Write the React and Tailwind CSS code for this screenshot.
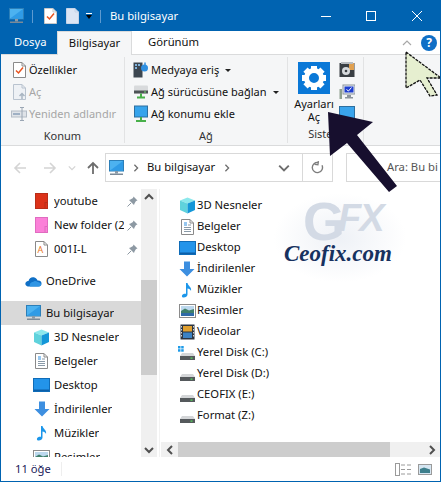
import React from "react";

const font = { fontFamily: '"Noto Sans", sans-serif' };

function Pc({ className = "w-[17px] h-[16px]" }) {
  return (
    <svg viewBox="0 0 17 16" className={className}>
      <rect x="1.5" y="0.5" width="14" height="10.5" fill="#4cb2f0" stroke="#2c7fb8" />
      <path d="M2 10.5 L15 1 V10.5 Z" fill="#2f9be6" />
      <rect x="7" y="11" width="3" height="2.5" fill="#8a9aa8" />
      <rect x="2" y="13.5" width="13" height="1.5" fill="#7b8a98" />
    </svg>
  );
}

function Doc({ children, className = "w-[13px] h-[16px]", stroke = "#8a8a8a", fill = "#fff" }) {
  return (
    <svg viewBox="0 0 13 16" className={className}>
      <path d="M0.5 0.5 H9 L12.5 4 V15.5 H0.5 Z" fill={fill} stroke={stroke} />
      <path d="M9 0.5 V4 H12.5" fill="none" stroke={stroke} />
      {children}
    </svg>
  );
}

// coloured page with its small fold at the bottom right
function Swatch({ fill, edge }) {
  return (
    <svg viewBox="0 0 13 16" className="w-[13px] h-[16px]">
      <rect x="0.5" y="0.5" width="12" height="15" fill={fill} stroke={edge} />
      <rect x="10" y="9.5" width="2.5" height="6" fill={fill} stroke={edge} />
    </svg>
  );
}

function Check() {
  return <path d="M3 8.5 L5.5 11 L10 5.5" fill="none" stroke="#e8531f" strokeWidth="1.5" />;
}

function Drive({ win }) {
  return (
    <svg viewBox="0 0 18 16" className="w-[18px] h-[16px]">
      {win && (
        <g fill="#1e9be8">
          <rect x="0" y="1" width="2.5" height="2.5" />
          <rect x="3.2" y="1" width="2.5" height="2.5" />
          <rect x="0" y="4.2" width="2.5" height="2.5" />
          <rect x="3.2" y="4.2" width="2.5" height="2.5" />
        </g>
      )}
      <path d="M4 8 H15 L17 11 H2 Z" fill="#d4d6d8" />
      <rect x="2" y="11" width="15" height="4" fill="#55595c" />
      <rect x="12.5" y="12.5" width="2" height="1.2" fill="#55e05a" />
    </svg>
  );
}

function Cube() {
  return (
    <svg viewBox="0 0 17 17" className="w-[17px] h-[17px]">
      <path d="M8.5 0.5 L16 3.5 L8.5 6.5 L1 3.5 Z" fill="#8ce8ec" />
      <path d="M1 3.5 L8.5 6.5 V16.5 L1 13 Z" fill="#5fd2dc" />
      <path d="M16 3.5 L8.5 6.5 V16.5 L16 13 Z" fill="#1497d8" />
    </svg>
  );
}

function Papers() {
  return (
    <Doc className="w-[13px] h-[16px]">
      <path d="M3 4 H6 M3 6 H6" stroke="#2f8fe0" />
      <path d="M7 6 H10 M3 8.5 H10 M3 10.5 H10 M3 12.5 H10" stroke="#8a9aa8" />
    </Doc>
  );
}

function Desk() {
  return (
    <svg viewBox="0 0 17 14" className="w-[17px] h-[14px]">
      <rect x="0.5" y="0.5" width="16" height="13" fill="#2394ea" stroke="#0f6cb8" />
      <rect x="1" y="11.5" width="15" height="1.5" fill="#0c5fa8" />
    </svg>
  );
}

function Down() {
  return (
    <svg viewBox="0 0 16 16" className="w-[16px] h-[16px]">
      <path d="M5 0.5 H11 V8 H15.5 L8 15.5 L0.5 8 H5 Z" fill="#3d8fe0" />
    </svg>
  );
}

function Note() {
  return (
    <svg viewBox="0 0 12 16" className="w-[12px] h-[16px]">
      <path d="M5 1 H6.5 C7 4 11 5 10 9 C9.5 7.5 8 6.5 6.5 6.5 V12.5 C6.5 14.5 4.5 15.5 2.8 15.5 C1.3 15.5 0.6 14.5 1 13.4 C1.5 12 3.5 11.3 5 11.8 Z" fill="#1c96ea" />
    </svg>
  );
}

function Pic() {
  return (
    <svg viewBox="0 0 17 14" className="w-[17px] h-[14px]">
      <rect x="0.5" y="0.5" width="16" height="13" fill="#fff" stroke="#8b8b8b" />
      <rect x="2" y="2" width="13" height="5" fill="#bcd8ee" />
      <path d="M2 7 L6 4.5 L10 6.5 L15 5 V12 H2 Z" fill="#3f7f6a" />
      <rect x="2" y="9" width="13" height="3" fill="#2f6aa8" />
    </svg>
  );
}

function Film() {
  return (
    <svg viewBox="0 0 15 16" className="w-[15px] h-[16px]">
      <rect x="0.5" y="0.5" width="14" height="15" fill="#2c3440" />
      <rect x="3" y="2" width="9" height="5.5" fill="#e0a030" />
      <rect x="3" y="8.5" width="9" height="5.5" fill="#3b82c4" />
      <path d="M1.5 2 V14 M13.5 2 V14" stroke="#cfd4da" strokeDasharray="1.5 1.5" />
    </svg>
  );
}

function Pin() {
  return (
    <svg viewBox="0 0 11 11" className="w-[11px] h-[11px]">
      <path d="M6.5 0.5 L10.5 4.5 L9 5 L7.5 7.5 L7 9 L2 4 L3.5 3.5 L6 2 Z" fill="#8d99a3" />
      <path d="M4 7 L0.5 10.5" stroke="#8d99a3" />
    </svg>
  );
}

function Gear() {
  return (
    <svg viewBox="0 0 32 32" className="w-[32px] h-[32px]">
      <rect width="32" height="32" fill="#0a78d7" />
      {[0, 45, 90, 135, 180, 225, 270, 315].map((a) => (
        <rect key={a} x="13" y="4" width="6" height="6" fill="#fff" transform={`rotate(${a} 16 16)`} />
      ))}
      <circle cx="16" cy="16" r="7.5" fill="none" stroke="#fff" strokeWidth="5" />
    </svg>
  );
}

function Chev({ dir = "down", className = "w-[10px] h-[10px]", stroke = "#6d6d6d", width = 1.6 }) {
  const d = {
    down: "M1 3 L5 7 L9 3",
    up: "M1 7 L5 3 L9 7",
    left: "M7 1 L3 5 L7 9",
    right: "M3 1 L7 5 L3 9",
  }[dir];
  return (
    <svg viewBox="0 0 10 10" className={className}>
      <path d={d} fill="none" stroke={stroke} strokeWidth={width} />
    </svg>
  );
}

function Caret() {
  return <span className="ml-[6px] w-0 h-0 border-x-[3px] border-x-transparent border-t-[3px] border-t-[#222]" />;
}

function NavRow({ icon, label, pin, indent = "pl-[32px]", selected }) {
  return (
    <div className={`flex items-center h-[24px] shrink-0 ${indent} ${selected ? "bg-[#d9d9d9]" : ""}`}>
      <span className="w-[21px] shrink-0 flex justify-center pr-[4px]">{icon}</span>
      <span className={`overflow-hidden whitespace-nowrap ${pin ? "w-[70px]" : ""}`}>{label}</span>
      {pin && <span className="ml-[3px]"><Pin /></span>}
    </div>
  );
}

function RibbonRow({ icon, label, muted, caret }) {
  return (
    <div className={`flex items-center h-[22px] whitespace-nowrap ${muted ? "text-[#a6a6a6]" : ""}`}>
      <span className="w-[18px] flex justify-center mr-[1px]">{icon}</span>
      <span>{label}</span>
      {caret && <Caret />}
    </div>
  );
}

function MediaIcon() {
  return (
    <svg viewBox="0 0 16 16" className="w-[16px] h-[16px]">
      <rect x="0.5" y="0.5" width="9" height="15" fill="#3c4650" />
      <rect x="2" y="2" width="2" height="2" fill="#7fb2dc" />
      <rect x="5" y="2" width="2" height="2" fill="#7fb2dc" />
      <rect x="2" y="5" width="2" height="2" fill="#7fb2dc" />
      <circle cx="11.5" cy="6" r="3.5" fill="#2f8fe0" />
      <path d="M12 0.5 V5" stroke="#2f8fe0" strokeWidth="1.5" />
    </svg>
  );
}

function NetDrive() {
  return (
    <svg viewBox="0 0 16 16" className="w-[16px] h-[16px]">
      <rect x="1" y="1.5" width="14" height="8" rx="1" fill="#d8dadc" />
      <rect x="1" y="6.5" width="14" height="3" fill="#4d5356" />
      <rect x="11" y="7.5" width="2" height="1" fill="#6fe06f" />
      <path d="M8 9.5 V13 M4 13.5 H12" stroke="#48b04a" strokeWidth="2" />
    </svg>
  );
}

function NetPlace() {
  return (
    <svg viewBox="0 0 16 18" className="w-[16px] h-[18px]">
      <rect x="1.5" y="1" width="13" height="11" fill="#36a4ec" stroke="#2d6f9f" />
      <path d="M8 12 V15 M3 16 H13" stroke="#48b04a" strokeWidth="2" />
    </svg>
  );
}

const navItems = [
  ["3D Nesneler", <Cube />],
  ["Belgeler", <Papers />],
  ["Desktop", <Desk />],
  ["İndirilenler", <Down />],
  ["Müzikler", <Note />],
  ["Resimler", <Pic />],
];

const files = [
  ["3D Nesneler", <Cube />],
  ["Belgeler", <Papers />],
  ["Desktop", <Desk />],
  ["İndirilenler", <Down />],
  ["Müzikler", <Note />],
  ["Resimler", <Pic />],
  ["Videolar", <Film />],
  ["Yerel Disk (C:)", <Drive win />],
  ["Yerel Disk (D:)", <Drive />],
  ["CEOFIX (E:)", <Drive />],
  ["Format (Z:)", <Drive />],
];

export default function App() {
  return (
    <div style={font} className="relative w-[441px] h-[482px] overflow-hidden bg-white border border-[#0063b1] text-[11px] text-[#111] flex flex-col">
      {/* title bar */}
      <div className="h-[30px] shrink-0 bg-[#0063b1] flex items-center text-white pl-[7px]">
        <Pc />
        <span className="w-px h-[13px] bg-[#5d9ad0] ml-[7px]" />
        <span className="ml-[11px]">
          <Doc stroke="#c9c9c9"><Check /></Doc>
        </span>
        <span className="ml-[9px]">
          <Doc stroke="#c6d4e8" fill="#dbe5f4" />
        </span>
        <span className="ml-[7px] flex flex-col items-center gap-[1px]">
          <span className="w-[6px] h-px bg-white" />
          <span className="w-0 h-0 border-x-[3.5px] border-x-transparent border-t-[4px] border-t-black" />
        </span>
        <span className="w-px h-[13px] bg-[#5d9ad0] ml-[8px]" />
        <span className="ml-[9px] text-[11.25px]">Bu bilgisayar</span>
        <span className="ml-auto w-[10px] h-px bg-white mr-[35px]" />
        <span className="w-[10px] h-[10px] border border-white mr-[36px]" />
        <svg viewBox="0 0 10 10" className="w-[10px] h-[10px] mr-[18px]">
          <path d="M0 0 L10 10 M10 0 L0 10" stroke="#fff" />
        </svg>
      </div>

      {/* tabs */}
      <div className="h-[24px] shrink-0 flex border-b border-[#dadbdc] text-[11.25px]">
        <div className="w-[56px] bg-[#0063b1] text-white pl-[13px] flex items-center">Dosya</div>
        <div className="w-[75px] h-[24px] bg-[#f5f6f7] border-x border-t border-[#dadbdc] flex items-center justify-center">Bilgisayar</div>
        <div className="ml-[16px] flex items-center">Görünüm</div>
        <div className="ml-auto flex items-center">
          <Chev dir="up" stroke="#a8a8a8" width={1.2} />
          <span className="ml-[9px] mr-[3px] w-[16px] h-[16px] rounded-full bg-[#0f6fc6] text-white font-bold text-[12px] flex items-center justify-center">?</span>
        </div>
      </div>

      {/* ribbon */}
      <div className="h-[91px] shrink-0 bg-[#f5f6f7] border-b border-[#dadbdc] flex">
        <div className="w-[124px] border-r border-[#e2e3e4] my-[2px] flex flex-col">
          <div className="flex-1 pl-[9px] pt-[2px]">
            <RibbonRow icon={<Doc stroke="#8a8a8a"><Check /></Doc>} label="Özellikler" />
            <RibbonRow
              muted
              label="Aç"
              icon={<Doc stroke="#b9c3cf" fill="#eef1f5"><path d="M9 15 V10 M6.5 12 L9 9.5 L11.5 12" stroke="#a9b5c2" fill="none" strokeWidth="1.5" /></Doc>}
            />
            <RibbonRow
              muted
              label="Yeniden adlandır"
              icon={
                <svg viewBox="0 0 16 14" className="w-[16px] h-[14px]">
                  <rect x="0.5" y="4" width="15" height="6" fill="#dfe3e8" stroke="#b4bcc6" />
                  <rect x="2" y="6" width="7" height="2" fill="#9fb0c4" />
                  <path d="M11 0.5 V13.5 M9 0.5 H13 M9 13.5 H13" stroke="#9aa6b4" />
                </svg>
              }
            />
          </div>
          <div className="h-[20px] pt-[3px] text-center text-[#333]">Konum</div>
        </div>
        <div className="w-[163px] border-r border-[#e2e3e4] my-[2px] flex flex-col">
          <div className="flex-1 pl-[7px] pt-[2px]">
            <RibbonRow icon={<MediaIcon />} label="Medyaya eriş" caret />
            <RibbonRow icon={<NetDrive />} label="Ağ sürücüsüne bağlan" caret />
            <RibbonRow icon={<NetPlace />} label="Ağ konumu ekle" />
          </div>
          <div className="h-[20px] pt-[3px] text-center text-[#333]">Ağ</div>
        </div>
        <div className="w-[76px] border-r border-[#e2e3e4] my-[2px] flex flex-col">
          <div className="flex-1 flex pl-[6px]">
            <div className="w-[40px] flex flex-col items-center pt-[5px] leading-[13px] whitespace-nowrap">
              <Gear />
              <span className="mt-[3px]">Ayarları</span>
              <span>Aç</span>
            </div>
            <div className="ml-[5px] pt-[5px] flex flex-col gap-[6px]">
              <svg viewBox="0 0 16 16" className="w-[16px] h-[16px]">
                <rect x="0.5" y="1" width="15" height="14" fill="#3a3f44" />
                <rect x="10" y="1" width="5" height="7" fill="#e0a050" />
                <rect x="2" y="0" width="12" height="2" fill="#b8bcc0" />
                <circle cx="7" cy="9" r="4" fill="#d6d9dc" />
                <circle cx="7" cy="9" r="1.3" fill="#3a3f44" />
              </svg>
              <svg viewBox="0 0 16 16" className="w-[16px] h-[16px]">
                <rect x="4" y="1" width="12" height="9" fill="#e6ecf2" stroke="#8b949c" />
                <rect x="5.5" y="2.5" width="9" height="6" fill="#1f3fd0" />
                <path d="M7.5 5.5 L9.5 7 L12.5 3.5" stroke="#fff" fill="none" />
                <rect x="0.5" y="5" width="2.5" height="10" fill="#8fa090" />
                <rect x="8" y="11" width="4" height="2" fill="#8b949c" />
                <rect x="6" y="13" width="8" height="1.5" fill="#8b949c" />
              </svg>
              <svg viewBox="0 0 16 14" className="w-[16px] h-[14px]">
                <rect x="0.5" y="0.5" width="15" height="13" fill="#3aa4ec" stroke="#2d6f9f" />
              </svg>
            </div>
          </div>
          <div className="h-[20px] pt-[3px] text-center text-[#333]">Sistem</div>
        </div>
      </div>

      {/* address bar */}
      <div className="h-[43px] shrink-0 flex items-center pl-[12px]">
        <svg viewBox="0 0 14 14" className="w-[14px] h-[14px]">
          <path d="M13 7 H2 M7 2 L2 7 L7 12" fill="none" stroke="#d4d4d4" strokeWidth="1.6" />
        </svg>
        <svg viewBox="0 0 14 14" className="ml-[16px] w-[14px] h-[14px]">
          <path d="M1 7 H12 M7 2 L12 7 L7 12" fill="none" stroke="#d4d4d4" strokeWidth="1.6" />
        </svg>
        <span className="ml-[11px]"><Chev dir="down" className="w-[8px] h-[8px]" stroke="#d4d4d4" /></span>
        <svg viewBox="0 0 14 14" className="ml-[10px] w-[14px] h-[14px]">
          <path d="M7 13 V2 M2 7 L7 2 L12 7" fill="none" stroke="#6d6d6d" strokeWidth="1.8" />
        </svg>
        <div className="ml-[5px] w-[228px] h-[29px] border border-[#d9d9d9] flex items-center">
          <span className="ml-[2px]"><Pc /></span>
          <span className="ml-[7px]"><Chev dir="right" className="w-[8px] h-[8px]" /></span>
          <span className="ml-[7px] text-[11.25px]">Bu bilgisayar</span>
          <span className="ml-[8px]"><Chev dir="right" className="w-[8px] h-[8px]" /></span>
          <span className="ml-auto pr-[12px] flex items-center h-full border-r border-[#d9d9d9]">
            <Chev dir="down" className="w-[12px] h-[12px]" />
          </span>
          <span className="w-[29px] flex justify-center">
            <svg viewBox="0 0 14 14" className="w-[13px] h-[13px]">
              <path d="M11.5 4 A5.5 5.5 0 1 1 7 1.5 M7 0 V4 H3.5" transform="rotate(8 7 7)" fill="none" stroke="#7d7d7d" strokeWidth="1.5" />
            </svg>
          </span>
        </div>
        <div className="ml-[13px] flex-1 h-[29px] border-y border-l border-[#d9d9d9] flex items-center pl-[40px] text-[#555] text-[11.25px] whitespace-nowrap">
          Ara: Bu bi
        </div>
      </div>

      {/* body */}
      <div className="h-[268px] shrink-0 flex">
        <div className="w-[140px] overflow-hidden flex flex-col text-[11.25px]">
          <NavRow icon={<Swatch fill="#dc3219" edge="#b82d18" />} label="youtube" pin />
          <NavRow icon={<Swatch fill="#fb80d8" edge="#e06cc0" />} label="New folder (2)" pin />
          <NavRow icon={<Doc><text x="2.5" y="12" fontSize="9" fill="#e8761f">A</text></Doc>} label="001I-L" pin />
          <div className="h-[8px] shrink-0" />
          <NavRow
            indent="pl-[24px]"
            icon={
              <svg viewBox="0 0 17 11" className="w-[17px] h-[11px]">
                <path d="M4 10.5 C1 10.5 0 8.5 0.5 7 C1 5.5 2.5 5 3.5 5 C4 2 7 0.5 9.5 1.5 C11 2 12 3 12.5 4.5 C15 4 17 6 16.5 8 C16 10 15 10.5 13 10.5 Z" fill="#0f6fc6" />
                <path d="M5 10.5 C4 8.5 5.5 6 8 6 C9 4.5 11.5 4.5 12.5 6 C14.5 6 16 7.5 16.3 8.8 C16 10 15 10.5 13 10.5 Z" fill="#2f95e4" />
              </svg>
            }
            label="OneDrive"
          />
          <div className="h-[8px] shrink-0" />
          <NavRow indent="pl-[24px]" icon={<Pc />} label="Bu bilgisayar" selected />
          {navItems.map(([label, icon]) => (
            <NavRow key={label} icon={icon} label={label} />
          ))}
        </div>

        <div className="w-[16px] shrink-0 bg-[#f0f0f0] flex flex-col items-center">
          <span className="h-[15px] flex items-center"><Chev dir="up" stroke="#505050" width={2} /></span>
          <span className="mt-[76px] w-full h-[95px] bg-[#cdcdcd]" />
          <span className="mt-auto h-[15px] flex items-center"><Chev dir="down" stroke="#505050" width={2} /></span>
        </div>
        <div className="w-[4px] shrink-0"><div className="ml-[2px] w-px h-full bg-[#f2f2f2]" /></div>

        <div className="flex-1 min-w-0 flex flex-col text-[11.25px]">
          <div className="flex-1 pt-[6px] pl-[17px]">
            {files.map(([label, icon]) => (
              <div key={label} className="flex items-center h-[21px]">
                <span className="w-[19px] shrink-0 flex justify-center pr-[1px]">{icon}</span>
                <span>{label}</span>
              </div>
            ))}
          </div>
          <div className="h-[15px] shrink-0 bg-[#f0f0f0] flex items-center justify-between">
            <span className="w-[17px] flex justify-center"><Chev dir="left" stroke="#505050" width={2} /></span>
            <span className="w-[212px] h-full bg-[#cdcdcd] mr-auto" />
            <span className="w-[17px] flex justify-center"><Chev dir="right" stroke="#505050" width={2} /></span>
          </div>
        </div>
      </div>

      {/* status bar */}
      <div className="flex-1 flex items-center pl-[14px] text-[11.25px] text-[#22225a]">
        <span>11 öğe</span>
        <span className="ml-[10px] w-px h-[14px] bg-[#eeeeee]" />
        <svg viewBox="0 0 17 13" className="ml-auto w-[17px] h-[13px]">
          <rect x="0.5" y="0.5" width="4" height="12" fill="none" stroke="#9a9a9a" />
          <path d="M6 2 H16 M6 6.5 H16 M6 11 H16" stroke="#9a9a9a" strokeDasharray="4 2" />
        </svg>
        <svg viewBox="0 0 14 11" className="ml-[6px] mr-[8px] w-[14px] h-[11px]">
          <rect x="0.5" y="0.5" width="13" height="10" fill="#d6e6f2" stroke="#9a9a9a" />
          <path d="M2 5 L6 3.5 L12 5.5 V9 H2 Z" fill="#3d7f8c" />
        </svg>
      </div>

      {/* watermark */}
      <div className="absolute left-[272px] top-[192px] w-[134px] h-[90px] bg-[radial-gradient(ellipse_at_center,#eef1f6_0%,#ffffff_70%)]" />
      <div className="absolute left-[302px] top-[190px] flex items-center leading-[60px] font-bold text-[#d3dae5]" style={{ fontFamily: '"Liberation Sans", sans-serif' }}>
        <span className="text-[54px]">G</span>
        <span className="text-[38px] tracking-[-2px] -ml-[7px] -mt-[6px] italic">FX</span>
      </div>
      <div className="absolute left-[283px] top-[240px] text-[23px] leading-[26px] font-bold italic text-[#17315f]" style={{ fontFamily: '"Liberation Serif", serif' }}>
        Ceofix.com
      </div>

      {/* arrows drawn over the picture */}
      <svg viewBox="0 0 441 482" className="absolute left-[-1px] top-[-1px] w-[441px] h-[482px] pointer-events-none">
        <path d="M328 112 L373 122 L357 135 L397 186 L389 192 L347 143 L330 156 Z" fill="#170f2e" />
        <path d="M406 52 L441 78 L427 78 L437 95 L430 96 L420 80 L406 88 Z" fill="#e6efd0" stroke="#111" strokeWidth="1.3" strokeDasharray="3 1" />
      </svg>
    </div>
  );
}
